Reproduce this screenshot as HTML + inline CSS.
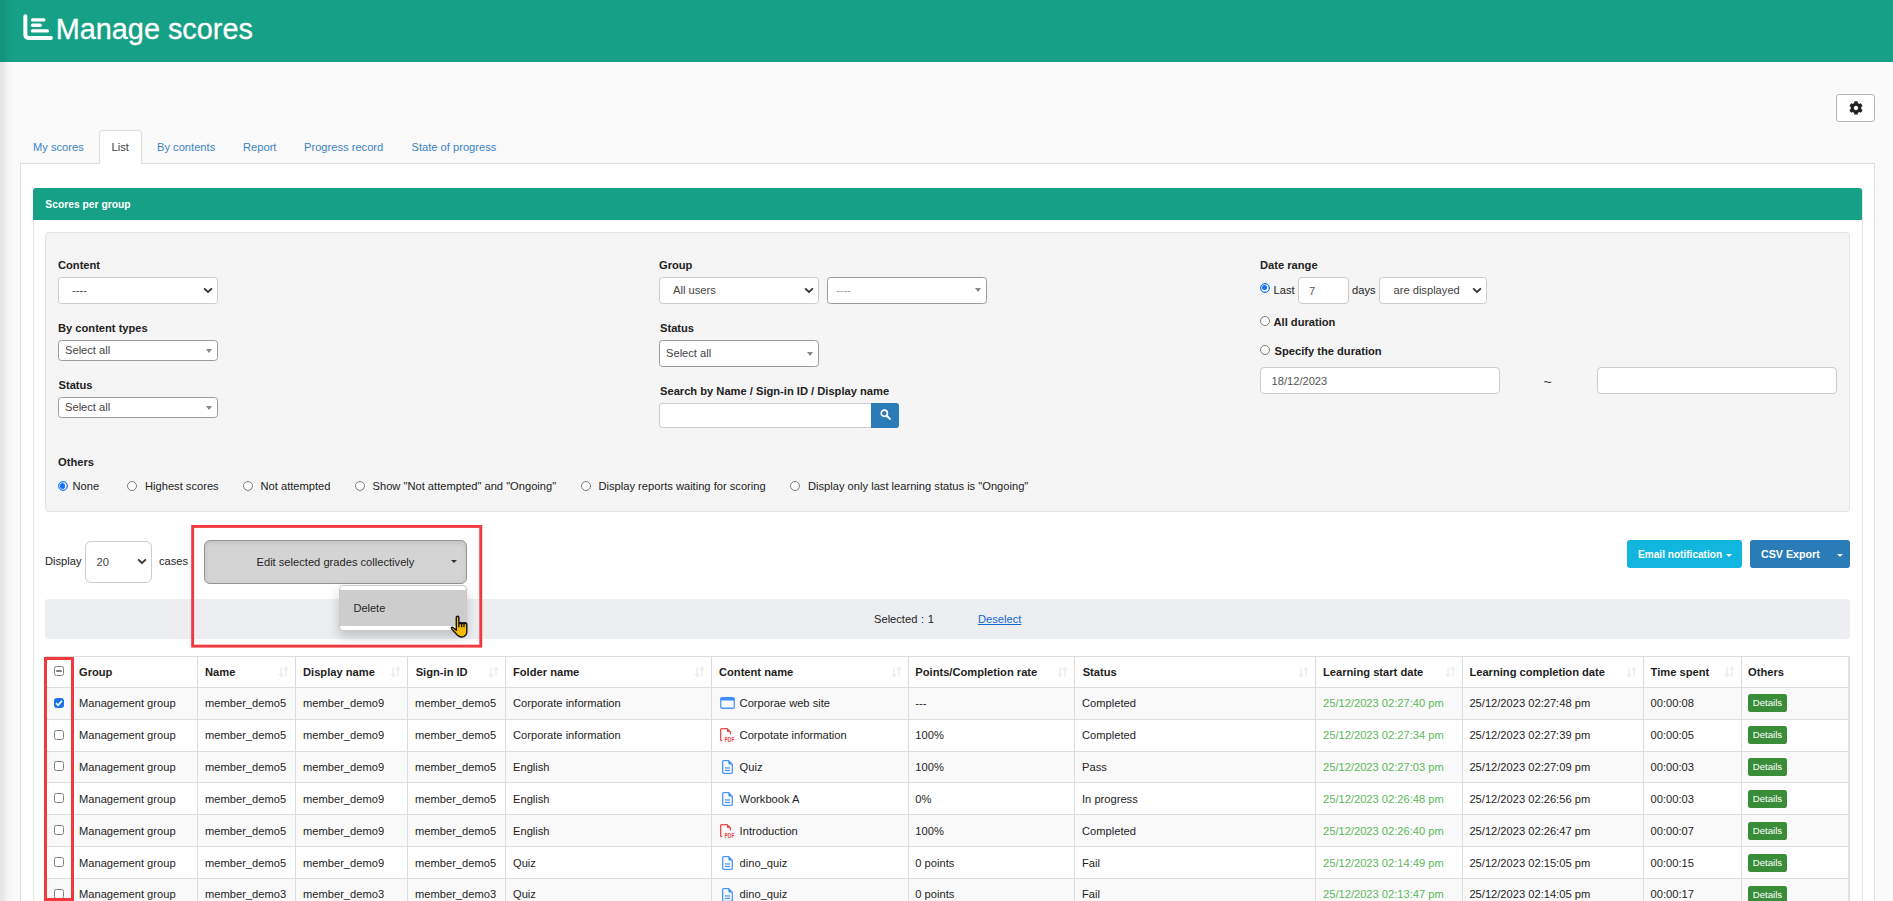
<!DOCTYPE html>
<html lang="en">
<head>
<meta charset="utf-8">
<title>Manage scores</title>
<style>
*{box-sizing:border-box;margin:0;padding:0}
html,body{width:1893px;height:901px;overflow:hidden}
body{position:relative;background:#fafafa;font-family:"Liberation Sans",Arial,sans-serif;font-size:11.15px;color:#222;line-height:1}
.abs,.abs>*{position:absolute}
.abs{left:0;top:0;width:1893px;height:901px;overflow:hidden}
.t{position:absolute;white-space:nowrap;line-height:14px;height:14px;margin-top:-1px}
.b{font-weight:bold}
#edge{left:0;top:0;width:16px;height:901px;background:linear-gradient(to right,rgba(0,0,0,.085) 0,rgba(0,0,0,.08) 3px,rgba(0,0,0,.02) 8px,rgba(0,0,0,0) 15px)}
#hdr{left:0;top:0;width:1893px;height:62px;background:#16a085}
#title{left:55.7px;top:12.1px;font-size:28.85px;line-height:34px;color:#fff;white-space:nowrap;-webkit-text-stroke:.3px #fff;transform:scaleY(1.033);transform-origin:0 26.5px}
#gear{left:1836px;top:94px;width:39px;height:28px;background:#fff;border:1px solid #b5b5b5;border-radius:3px}
#tabline{left:20px;top:163px;width:1855px;height:1px;background:#ddd}
#tabc{left:20px;top:164px;width:1855px;height:760px;background:#fff;border-left:1px solid #ddd;border-right:1px solid #ddd}
#tabact{left:99px;top:130px;width:43px;height:34px;background:#fff;border:1px solid #ddd;border-bottom:0;border-radius:4px 4px 0 0}
.tab{top:140.5px;color:#3b84c4}
#panel{left:33px;top:188px;width:1830px;height:760px;border:1px solid #e5e5e5;border-top:0;border-radius:3px 3px 0 0}
#phead{left:33px;top:188px;width:1829px;height:32px;background:#16a085;border-radius:3px 3px 0 0}
#well{left:45px;top:232px;width:1805px;height:280px;background:#f5f5f5;border:1px solid #e3e3e3;border-radius:4px}
.sel{background:#fff;border:1px solid #ccc;border-radius:3.5px;height:27px}
.sel .t{top:6px;color:#444}
.s2{background:#fff;border:1px solid #9c9c9c;border-radius:3.5px}
.s2 .t{color:#444}
.s2 i{position:absolute;width:0;height:0;border-left:3px solid transparent;border-right:3px solid transparent;border-top:4px solid #888}
.chev{position:absolute}
.radio{width:10px;height:10px;border:1px solid #7c7c7c;border-radius:50%;background:#fff}
.radio.on{border:1px solid #1672f3;box-shadow:inset 0 0 0 .3px #1672f3}
.radio.on:after{content:"";position:absolute;left:1.2px;top:1.2px;width:5.6px;height:5.6px;border-radius:50%;background:#1672f3}
.inp{background:#fff;border:1px solid #ccc;border-radius:4px;height:27px}
.inp .t{top:7px;color:#555}
#sbtn{left:871px;top:403px;width:28px;height:25px;background:#2b7bb9;border-radius:0 3px 3px 0}
#bigbtn{left:204px;top:540px;width:263px;height:44px;background:#d4d4d4;border:1px solid #949494;border-radius:6px;box-shadow:inset 0 2px 4px rgba(0,0,0,.09)}
#dd{left:339px;top:585px;width:128px;height:46px;background:#fff;border:1px solid #c9c9c9;border-radius:4px;box-shadow:0 6px 12px rgba(0,0,0,.19)}
#dd div{position:absolute;left:0;top:4px;width:126px;height:36px;background:#cdcdcd}
.caret{width:0;height:0;border-left:3.5px solid transparent;border-right:3.5px solid transparent;border-top:3.5px solid #333}
#b1{left:1627px;top:540px;width:115px;height:28px;background:#10b6de;border-radius:3px}
#b2{left:1750px;top:540px;width:100px;height:28px;background:#2b7bb9;border-radius:3px}
.bt{color:#fff;font-weight:bold;font-size:10.2px}
#selbar{left:45px;top:599px;width:1805px;height:40px;background:#edeef2;border-radius:4px}
.red{border:3px solid #f23a3e}
#tbl{left:45px;top:0;width:1805px;height:901px}
#tbl>*{position:absolute}
.tr{left:0;width:1805px}
.tr>*{position:absolute;white-space:nowrap}
.td{top:0;color:#1e1e1e}
.td.g{color:#5cb85c}
.th{top:0;font-weight:bold;color:#1e1e1e}
.hl{left:0;width:1805px;height:1px;background:#ddd}
.vl{top:656px;width:1px;height:260px;background:#ddd;margin-left:-45px}
.cb{width:10px;height:10px;border:1px solid #808080;border-radius:2.5px;background:#fff}
.cb.on{background:#1a73e8;border-color:#1a73e8}
.cb.on svg{position:absolute;left:-1px;top:-1px}
.cb.ind i{position:absolute;left:1px;top:3.2px;width:6px;height:1.7px;background:#808080;border-radius:1px}
.det{width:39px;height:18px;background:#398d39;border-radius:2.5px;color:#fff;font-size:9.6px;line-height:18.6px;text-align:center}
.fi,.sort{position:absolute}
</style>
</head>
<body>
<div class="abs">
  <div id="hdr"></div>
  <svg style="left:23px;top:14px" width="31" height="27" viewBox="0 0 31 27"><path d="M2.35 2.3 V20.6 Q2.35 23.9 5.7 23.9 H27.9" fill="none" stroke="#fff" stroke-width="4" stroke-linecap="round"/><path d="M9.45 5.95 H20.85 M9.45 11.25 H17.25 M9.45 16.9 H24.45" fill="none" stroke="#fff" stroke-width="3.3" stroke-linecap="round"/></svg>
  <div id="title">Manage scores</div>

  <div id="gear"></div>
  <svg style="left:1849px;top:101px" width="14" height="14" viewBox="0 0 512 512"><path fill="#222" d="M487.4 315.7l-42.6-24.6c4.3-23.2 4.3-47 0-70.200l42.6-24.600c4.900-2.800 7.100-8.600 5.500-14-11.100-35.600-30-67.800-54.700-94.600-3.800-4.100-10-5.100-14.800-2.300L380.800 110c-17.900-15.400-38.500-27.300-60.800-35.100V25.800c0-5.600-3.900-10.500-9.400-11.700-36.700-8.200-74.300-7.800-109.200 0-5.500 1.200-9.400 6.100-9.400 11.700V75c-22.200 7.900-42.800 19.800-60.800 35.100L88.700 85.500c-4.900-2.800-11-1.900-14.800 2.300-24.700 26.700-43.600 58.900-54.700 94.600-1.700 5.400.6 11.200 5.500 14L67.300 221c-4.300 23.200-4.300 47 0 70.200l-42.600 24.600c-4.900 2.800-7.100 8.600-5.500 14 11.100 35.600 30 67.800 54.700 94.600 3.800 4.100 10 5.100 14.800 2.300l42.600-24.600c17.900 15.400 38.500 27.300 60.800 35.100v49.200c0 5.600 3.900 10.500 9.400 11.700 36.700 8.200 74.300 7.800 109.200 0 5.500-1.200 9.400-6.100 9.400-11.700v-49.200c22.200-7.900 42.800-19.800 60.800-35.100l42.600 24.600c4.900 2.800 11 1.900 14.800-2.300 24.700-26.700 43.600-58.900 54.700-94.600 1.500-5.500-.7-11.300-5.600-14.100zM256 336c-44.100 0-80-35.900-80-80s35.900-80 80-80 80 35.900 80 80-35.900 80-80 80z"/></svg>

  <div id="tabline"></div>
  <div id="tabc"></div>
  <div id="tabact"></div>
  <div class="t tab" style="left:33px">My scores</div>
  <div class="t tab" style="left:111.5px;color:#444">List</div>
  <div class="t tab" style="left:157px">By contents</div>
  <div class="t tab" style="left:243px">Report</div>
  <div class="t tab" style="left:304px">Progress record</div>
  <div class="t tab" style="left:411.5px">State of progress</div>

  <div id="panel"></div>
  <div id="phead"></div>
  <div class="t b" style="left:45.3px;top:199px;color:#fff;font-size:10.3px">Scores per group</div>

  <div id="well"></div>
  <!-- column 1 -->
  <div class="t b" style="left:58px;top:258.5px">Content</div>
  <div class="sel" style="left:58px;top:277px;width:160px"><div class="t" style="left:13px">----</div>
    <svg class="chev" style="left:144.4px;top:8.9px" width="10" height="8" viewBox="0 0 10 8"><path d="M1.1 1.3 L5 5 L8.9 1.3" fill="none" stroke="#333" stroke-width="1.8"/></svg></div>
  <div class="t b" style="left:58px;top:321.5px">By content types</div>
  <div class="s2" style="left:58px;top:340px;width:160px;height:21px"><div class="t" style="left:6px;top:3px">Select all</div><i style="left:147px;top:7.5px"></i></div>
  <div class="t b" style="left:58.5px;top:378.5px">Status</div>
  <div class="s2" style="left:58px;top:397px;width:160px;height:21px"><div class="t" style="left:6px;top:3px">Select all</div><i style="left:147px;top:7.5px"></i></div>
  <div class="t b" style="left:58px;top:455.5px">Others</div>
  <div class="radio on" style="left:57.5px;top:481px"></div><div class="t" style="left:72.5px;top:479.5px">None</div>
  <div class="radio" style="left:127px;top:481px"></div><div class="t" style="left:145px;top:479.5px">Highest scores</div>
  <div class="radio" style="left:243px;top:481px"></div><div class="t" style="left:260.5px;top:479.5px">Not attempted</div>
  <div class="radio" style="left:355px;top:481px"></div><div class="t" style="left:372.5px;top:479.5px">Show "Not attempted" and "Ongoing"</div>
  <div class="radio" style="left:581px;top:481px"></div><div class="t" style="left:598.5px;top:479.5px">Display reports waiting for scoring</div>
  <div class="radio" style="left:790px;top:481px"></div><div class="t" style="left:808px;top:479.5px">Display only last learning status is "Ongoing"</div>

  <!-- column 2 -->
  <div class="t b" style="left:659px;top:258.5px">Group</div>
  <div class="sel" style="left:659px;top:277px;width:160px"><div class="t" style="left:13px">All users</div>
    <svg class="chev" style="left:144.4px;top:8.9px" width="10" height="8" viewBox="0 0 10 8"><path d="M1.1 1.3 L5 5 L8.9 1.3" fill="none" stroke="#333" stroke-width="1.8"/></svg></div>
  <div class="s2" style="left:827px;top:277px;width:160px;height:27px"><div class="t" style="left:8px;top:6px;color:#999">----</div><i style="left:147px;top:10px"></i></div>
  <div class="t b" style="left:660px;top:321.5px">Status</div>
  <div class="s2" style="left:659px;top:340px;width:160px;height:27px"><div class="t" style="left:6px;top:6px">Select all</div><i style="left:147px;top:10.5px"></i></div>
  <div class="t b" style="left:660px;top:384.5px">Search by Name / Sign-in ID / Display name</div>
  <div class="inp" style="left:659px;top:403px;width:213px;height:25px;border-radius:3px 0 0 3px"></div>
  <div id="sbtn"></div>
  <svg style="left:880px;top:408.6px" width="11" height="11" viewBox="0 0 12 12"><circle cx="4.7" cy="4.7" r="3.4" fill="none" stroke="#fff" stroke-width="1.8"/><path d="M7.3 7.3 L10.8 10.8" stroke="#fff" stroke-width="2.2" stroke-linecap="round"/></svg>

  <!-- column 3 -->
  <div class="t b" style="left:1260px;top:258.5px">Date range</div>
  <div class="radio on" style="left:1259.5px;top:282.5px"></div>
  <div class="t" style="left:1273.5px;top:284px">Last</div>
  <div class="inp" style="left:1298px;top:277px;width:51px"><div class="t" style="left:10px">7</div></div>
  <div class="t" style="left:1352px;top:284px">days</div>
  <div class="sel" style="left:1379px;top:277px;width:108px"><div class="t" style="left:13.5px">are displayed</div>
    <svg class="chev" style="left:92.4px;top:8.9px" width="10" height="8" viewBox="0 0 10 8"><path d="M1.1 1.3 L5 5 L8.9 1.3" fill="none" stroke="#333" stroke-width="1.8"/></svg></div>
  <div class="radio" style="left:1259.5px;top:315.5px"></div>
  <div class="t b" style="left:1273.5px;top:315.5px">All duration</div>
  <div class="radio" style="left:1259.5px;top:345px"></div>
  <div class="t b" style="left:1274.5px;top:344.5px">Specify the duration</div>
  <div class="inp" style="left:1260px;top:367px;width:240px"><div class="t" style="left:10.5px">18/12/2023</div></div>
  <div class="t" style="left:1543.5px;top:375.5px;font-size:14px;color:#333">~</div>
  <div class="inp" style="left:1597px;top:367px;width:240px"></div>

  <!-- toolbar -->
  <div id="selbar"></div>
  <div class="t" style="left:45px;top:554.5px">Display</div>
  <div class="sel" style="left:85px;top:541px;width:67px;height:42px;border-radius:6px"><div class="t" style="left:10.5px;top:14px">20</div>
    <svg class="chev" style="left:50.6px;top:16.2px" width="10" height="8" viewBox="0 0 10 8"><path d="M1.1 1.3 L5 5 L8.9 1.3" fill="none" stroke="#333" stroke-width="1.8"/></svg></div>
  <div class="t" style="left:159px;top:554.5px">cases</div>
  <div id="bigbtn"></div>
  <div class="t" style="left:256.5px;top:556px;color:#262626">Edit selected grades collectively</div>
  <div class="caret" style="left:450.5px;top:560px"></div>
  <div class="t" style="left:874px;top:613px;word-spacing:.6px">Selected : 1</div>
  <div class="t" style="left:978px;top:613px;color:#1166d8;text-decoration:underline">Deselect</div>
  <div id="dd"><div></div></div>
  <div class="t" style="left:353.5px;top:602px;color:#262626;font-size:11px">Delete</div>

  <div id="b1"></div>
  <div class="t bt" style="left:1638px;top:548.7px;font-size:10.1px">Email notification</div>
  <div class="caret" style="left:1725.5px;top:553.5px;border-top-color:#fff"></div>
  <div id="b2"></div>
  <div class="t bt" style="left:1761px;top:548px;font-size:10.7px">CSV Export</div>
  <div class="caret" style="left:1837px;top:553.5px;border-top-color:#fff"></div>

  <!-- table -->
  <div id="tbl">
<div class="tr" style="top:657px;height:30px;background:#fff">
<span class="cb ind" style="left:9px;top:9px"><i></i></span>
<span class="th" style="left:34px;line-height:30px">Group</span>
<span class="th" style="left:160px;line-height:30px">Name</span>
<svg class="sort" style="left:233px;top:9px" width="11" height="12" viewBox="0 0 11 12"><path d="M3 1 V10.2 M1 8.3 L3 10.6 L5 8.3" fill="none" stroke="#eeeeee" stroke-width="1.5"/><path d="M8 11 V1.8 M6 3.7 L8 1.4 L10 3.7" fill="none" stroke="#efefef" stroke-width="1.5"/></svg>
<span class="th" style="left:258px;line-height:30px">Display name</span>
<svg class="sort" style="left:345px;top:9px" width="11" height="12" viewBox="0 0 11 12"><path d="M3 1 V10.2 M1 8.3 L3 10.6 L5 8.3" fill="none" stroke="#eeeeee" stroke-width="1.5"/><path d="M8 11 V1.8 M6 3.7 L8 1.4 L10 3.7" fill="none" stroke="#efefef" stroke-width="1.5"/></svg>
<span class="th" style="left:370.7px;line-height:30px">Sign-in ID</span>
<svg class="sort" style="left:443px;top:9px" width="11" height="12" viewBox="0 0 11 12"><path d="M3 1 V10.2 M1 8.3 L3 10.6 L5 8.3" fill="none" stroke="#eeeeee" stroke-width="1.5"/><path d="M8 11 V1.8 M6 3.7 L8 1.4 L10 3.7" fill="none" stroke="#efefef" stroke-width="1.5"/></svg>
<span class="th" style="left:468px;line-height:30px">Folder name</span>
<svg class="sort" style="left:649px;top:9px" width="11" height="12" viewBox="0 0 11 12"><path d="M3 1 V10.2 M1 8.3 L3 10.6 L5 8.3" fill="none" stroke="#eeeeee" stroke-width="1.5"/><path d="M8 11 V1.8 M6 3.7 L8 1.4 L10 3.7" fill="none" stroke="#efefef" stroke-width="1.5"/></svg>
<span class="th" style="left:674px;line-height:30px">Content name</span>
<svg class="sort" style="left:846px;top:9px" width="11" height="12" viewBox="0 0 11 12"><path d="M3 1 V10.2 M1 8.3 L3 10.6 L5 8.3" fill="none" stroke="#eeeeee" stroke-width="1.5"/><path d="M8 11 V1.8 M6 3.7 L8 1.4 L10 3.7" fill="none" stroke="#efefef" stroke-width="1.5"/></svg>
<span class="th" style="left:870.3px;line-height:30px">Points/Completion rate</span>
<svg class="sort" style="left:1012px;top:9px" width="11" height="12" viewBox="0 0 11 12"><path d="M3 1 V10.2 M1 8.3 L3 10.6 L5 8.3" fill="none" stroke="#eeeeee" stroke-width="1.5"/><path d="M8 11 V1.8 M6 3.7 L8 1.4 L10 3.7" fill="none" stroke="#efefef" stroke-width="1.5"/></svg>
<span class="th" style="left:1037.7px;line-height:30px">Status</span>
<svg class="sort" style="left:1253px;top:9px" width="11" height="12" viewBox="0 0 11 12"><path d="M3 1 V10.2 M1 8.3 L3 10.6 L5 8.3" fill="none" stroke="#eeeeee" stroke-width="1.5"/><path d="M8 11 V1.8 M6 3.7 L8 1.4 L10 3.7" fill="none" stroke="#efefef" stroke-width="1.5"/></svg>
<span class="th" style="left:1278px;line-height:30px">Learning start date</span>
<svg class="sort" style="left:1400px;top:9px" width="11" height="12" viewBox="0 0 11 12"><path d="M3 1 V10.2 M1 8.3 L3 10.6 L5 8.3" fill="none" stroke="#eeeeee" stroke-width="1.5"/><path d="M8 11 V1.8 M6 3.7 L8 1.4 L10 3.7" fill="none" stroke="#efefef" stroke-width="1.5"/></svg>
<span class="th" style="left:1424.4px;line-height:30px">Learning completion date</span>
<svg class="sort" style="left:1581px;top:9px" width="11" height="12" viewBox="0 0 11 12"><path d="M3 1 V10.2 M1 8.3 L3 10.6 L5 8.3" fill="none" stroke="#eeeeee" stroke-width="1.5"/><path d="M8 11 V1.8 M6 3.7 L8 1.4 L10 3.7" fill="none" stroke="#efefef" stroke-width="1.5"/></svg>
<span class="th" style="left:1605.6px;line-height:30px">Time spent</span>
<svg class="sort" style="left:1679px;top:9px" width="11" height="12" viewBox="0 0 11 12"><path d="M3 1 V10.2 M1 8.3 L3 10.6 L5 8.3" fill="none" stroke="#eeeeee" stroke-width="1.5"/><path d="M8 11 V1.8 M6 3.7 L8 1.4 L10 3.7" fill="none" stroke="#efefef" stroke-width="1.5"/></svg>
<span class="th" style="left:1703px;line-height:30px">Others</span>
</div>
<div class="tr" style="top:688px;height:31px;background:#f9f9f9">
<span class="cb on" style="left:9px;top:10px"><svg width="10" height="10" viewBox="0 0 10 10"><path d="M2 5.2 L4.1 7.3 L8 2.8" fill="none" stroke="#fff" stroke-width="1.7"/></svg></span>
<span class="td" style="left:34px;top:0px;line-height:31px">Management group</span>
<span class="td" style="left:160px;top:0px;line-height:31px">member_demo5</span>
<span class="td" style="left:258px;top:0px;line-height:31px">member_demo9</span>
<span class="td" style="left:370px;top:0px;line-height:31px">member_demo5</span>
<span class="td" style="left:468px;top:0px;line-height:31px">Corporate information</span>
<svg class="fi" style="left:675px;top:9px" width="15" height="12" viewBox="0 0 15 12"><rect x="0.75" y="0.75" width="13.5" height="10.5" rx="1.3" fill="#fff" stroke="#4a93ff" stroke-width="1.3"/><rect x="0.6" y="0.4" width="13.8" height="3" rx="1" fill="#3d8bfd"/></svg><span class="td" style="left:694.6px;top:0px;line-height:31px">Corporae web site</span>
<span class="td" style="left:870.3px;top:0px;line-height:31px">---</span>
<span class="td" style="left:1037px;top:0px;line-height:31px">Completed</span>
<span class="td g" style="left:1278px;top:0px;line-height:31px">25/12/2023 02:27:40 pm</span>
<span class="td" style="left:1424.4px;top:0px;line-height:31px">25/12/2023 02:27:48 pm</span>
<span class="td" style="left:1605.6px;top:0px;line-height:31px">00:00:08</span>
<span class="det" style="left:1703px;top:6px">Details</span>
</div>
<div class="tr" style="top:720px;height:31px;background:#fff">
<span class="cb" style="left:9px;top:10px"></span>
<span class="td" style="left:34px;top:0px;line-height:31px">Management group</span>
<span class="td" style="left:160px;top:0px;line-height:31px">member_demo5</span>
<span class="td" style="left:258px;top:0px;line-height:31px">member_demo9</span>
<span class="td" style="left:370px;top:0px;line-height:31px">member_demo5</span>
<span class="td" style="left:468px;top:0px;line-height:31px">Corporate information</span>
<svg class="fi" style="left:675px;top:8px" width="15" height="14" viewBox="0 0 15 14"><path d="M2.2 12.7 H1.6 Q0.7 12.7 0.7 11.8 V1.6 Q0.7 0.7 1.6 0.7 H7 L10.4 4.1 V6.6" fill="none" stroke="#e5484d" stroke-width="1.3"/><path d="M7 0.4 L10.7 4.1 H7.9 Q7 4.1 7 3.2 Z" fill="#e5484d"/><text x="4.6" y="14" font-family="Liberation Sans, sans-serif" font-weight="bold" font-size="6.8" fill="#e5484d" textLength="9.8" lengthAdjust="spacingAndGlyphs">PDF</text></svg><span class="td" style="left:694.6px;top:0px;line-height:31px">Corpotate information</span>
<span class="td" style="left:870.3px;top:0px;line-height:31px">100%</span>
<span class="td" style="left:1037px;top:0px;line-height:31px">Completed</span>
<span class="td g" style="left:1278px;top:0px;line-height:31px">25/12/2023 02:27:34 pm</span>
<span class="td" style="left:1424.4px;top:0px;line-height:31px">25/12/2023 02:27:39 pm</span>
<span class="td" style="left:1605.6px;top:0px;line-height:31px">00:00:05</span>
<span class="det" style="left:1703px;top:6px">Details</span>
</div>
<div class="tr" style="top:752px;height:30px;background:#f9f9f9">
<span class="cb" style="left:9px;top:9px"></span>
<span class="td" style="left:34px;top:0px;line-height:30px">Management group</span>
<span class="td" style="left:160px;top:0px;line-height:30px">member_demo5</span>
<span class="td" style="left:258px;top:0px;line-height:30px">member_demo9</span>
<span class="td" style="left:370px;top:0px;line-height:30px">member_demo5</span>
<span class="td" style="left:468px;top:0px;line-height:30px">English</span>
<svg class="fi" style="left:677px;top:8px" width="11" height="14" viewBox="0 0 11 14"><path d="M1.7 0.7 H6.6 L10.3 4.4 V12.3 Q10.3 13.3 9.3 13.3 H1.7 Q0.7 13.3 0.7 12.3 V1.7 Q0.7 0.7 1.7 0.7 Z" fill="#fff" stroke="#4a93ff" stroke-width="1.3"/><path d="M6.4 0.4 L10.6 4.6 H7.4 Q6.4 4.6 6.4 3.6 Z" fill="#3d8bfd"/><rect x="3" y="7.3" width="5" height="1.3" fill="#4a93ff"/><rect x="3" y="9.8" width="5" height="1.3" fill="#4a93ff"/></svg><span class="td" style="left:694.6px;top:0px;line-height:30px">Quiz</span>
<span class="td" style="left:870.3px;top:0px;line-height:30px">100%</span>
<span class="td" style="left:1037px;top:0px;line-height:30px">Pass</span>
<span class="td g" style="left:1278px;top:0px;line-height:30px">25/12/2023 02:27:03 pm</span>
<span class="td" style="left:1424.4px;top:0px;line-height:30px">25/12/2023 02:27:09 pm</span>
<span class="td" style="left:1605.6px;top:0px;line-height:30px">00:00:03</span>
<span class="det" style="left:1703px;top:6px">Details</span>
</div>
<div class="tr" style="top:783px;height:31px;background:#fff">
<span class="cb" style="left:9px;top:10px"></span>
<span class="td" style="left:34px;top:1px;line-height:31px">Management group</span>
<span class="td" style="left:160px;top:1px;line-height:31px">member_demo5</span>
<span class="td" style="left:258px;top:1px;line-height:31px">member_demo9</span>
<span class="td" style="left:370px;top:1px;line-height:31px">member_demo5</span>
<span class="td" style="left:468px;top:1px;line-height:31px">English</span>
<svg class="fi" style="left:677px;top:9px" width="11" height="14" viewBox="0 0 11 14"><path d="M1.7 0.7 H6.6 L10.3 4.4 V12.3 Q10.3 13.3 9.3 13.3 H1.7 Q0.7 13.3 0.7 12.3 V1.7 Q0.7 0.7 1.7 0.7 Z" fill="#fff" stroke="#4a93ff" stroke-width="1.3"/><path d="M6.4 0.4 L10.6 4.6 H7.4 Q6.4 4.6 6.4 3.6 Z" fill="#3d8bfd"/><rect x="3" y="7.3" width="5" height="1.3" fill="#4a93ff"/><rect x="3" y="9.8" width="5" height="1.3" fill="#4a93ff"/></svg><span class="td" style="left:694.6px;top:1px;line-height:31px">Workbook A</span>
<span class="td" style="left:870.3px;top:1px;line-height:31px">0%</span>
<span class="td" style="left:1037px;top:1px;line-height:31px">In progress</span>
<span class="td g" style="left:1278px;top:1px;line-height:31px">25/12/2023 02:26:48 pm</span>
<span class="td" style="left:1424.4px;top:1px;line-height:31px">25/12/2023 02:26:56 pm</span>
<span class="td" style="left:1605.6px;top:1px;line-height:31px">00:00:03</span>
<span class="det" style="left:1703px;top:7px">Details</span>
</div>
<div class="tr" style="top:815px;height:31px;background:#f9f9f9">
<span class="cb" style="left:9px;top:10px"></span>
<span class="td" style="left:34px;top:1px;line-height:31px">Management group</span>
<span class="td" style="left:160px;top:1px;line-height:31px">member_demo5</span>
<span class="td" style="left:258px;top:1px;line-height:31px">member_demo9</span>
<span class="td" style="left:370px;top:1px;line-height:31px">member_demo5</span>
<span class="td" style="left:468px;top:1px;line-height:31px">English</span>
<svg class="fi" style="left:675px;top:9px" width="15" height="14" viewBox="0 0 15 14"><path d="M2.2 12.7 H1.6 Q0.7 12.7 0.7 11.8 V1.6 Q0.7 0.7 1.6 0.7 H7 L10.4 4.1 V6.6" fill="none" stroke="#e5484d" stroke-width="1.3"/><path d="M7 0.4 L10.7 4.1 H7.9 Q7 4.1 7 3.2 Z" fill="#e5484d"/><text x="4.6" y="14" font-family="Liberation Sans, sans-serif" font-weight="bold" font-size="6.8" fill="#e5484d" textLength="9.8" lengthAdjust="spacingAndGlyphs">PDF</text></svg><span class="td" style="left:694.6px;top:1px;line-height:31px">Introduction</span>
<span class="td" style="left:870.3px;top:1px;line-height:31px">100%</span>
<span class="td" style="left:1037px;top:1px;line-height:31px">Completed</span>
<span class="td g" style="left:1278px;top:1px;line-height:31px">25/12/2023 02:26:40 pm</span>
<span class="td" style="left:1424.4px;top:1px;line-height:31px">25/12/2023 02:26:47 pm</span>
<span class="td" style="left:1605.6px;top:1px;line-height:31px">00:00:07</span>
<span class="det" style="left:1703px;top:7px">Details</span>
</div>
<div class="tr" style="top:847px;height:31px;background:#fff">
<span class="cb" style="left:9px;top:10px"></span>
<span class="td" style="left:34px;top:1px;line-height:31px">Management group</span>
<span class="td" style="left:160px;top:1px;line-height:31px">member_demo5</span>
<span class="td" style="left:258px;top:1px;line-height:31px">member_demo9</span>
<span class="td" style="left:370px;top:1px;line-height:31px">member_demo5</span>
<span class="td" style="left:468px;top:1px;line-height:31px">Quiz</span>
<svg class="fi" style="left:677px;top:9px" width="11" height="14" viewBox="0 0 11 14"><path d="M1.7 0.7 H6.6 L10.3 4.4 V12.3 Q10.3 13.3 9.3 13.3 H1.7 Q0.7 13.3 0.7 12.3 V1.7 Q0.7 0.7 1.7 0.7 Z" fill="#fff" stroke="#4a93ff" stroke-width="1.3"/><path d="M6.4 0.4 L10.6 4.6 H7.4 Q6.4 4.6 6.4 3.6 Z" fill="#3d8bfd"/><rect x="3" y="7.3" width="5" height="1.3" fill="#4a93ff"/><rect x="3" y="9.8" width="5" height="1.3" fill="#4a93ff"/></svg><span class="td" style="left:694.6px;top:1px;line-height:31px">dino_quiz</span>
<span class="td" style="left:870.3px;top:1px;line-height:31px">0 points</span>
<span class="td" style="left:1037px;top:1px;line-height:31px">Fail</span>
<span class="td g" style="left:1278px;top:1px;line-height:31px">25/12/2023 02:14:49 pm</span>
<span class="td" style="left:1424.4px;top:1px;line-height:31px">25/12/2023 02:15:05 pm</span>
<span class="td" style="left:1605.6px;top:1px;line-height:31px">00:00:15</span>
<span class="det" style="left:1703px;top:7px">Details</span>
</div>
<div class="tr" style="top:879px;height:31px;background:#f9f9f9">
<span class="cb" style="left:9px;top:10px"></span>
<span class="td" style="left:34px;top:0px;line-height:31px">Management group</span>
<span class="td" style="left:160px;top:0px;line-height:31px">member_demo3</span>
<span class="td" style="left:258px;top:0px;line-height:31px">member_demo3</span>
<span class="td" style="left:370px;top:0px;line-height:31px">member_demo3</span>
<span class="td" style="left:468px;top:0px;line-height:31px">Quiz</span>
<svg class="fi" style="left:677px;top:9px" width="11" height="14" viewBox="0 0 11 14"><path d="M1.7 0.7 H6.6 L10.3 4.4 V12.3 Q10.3 13.3 9.3 13.3 H1.7 Q0.7 13.3 0.7 12.3 V1.7 Q0.7 0.7 1.7 0.7 Z" fill="#fff" stroke="#4a93ff" stroke-width="1.3"/><path d="M6.4 0.4 L10.6 4.6 H7.4 Q6.4 4.6 6.4 3.6 Z" fill="#3d8bfd"/><rect x="3" y="7.3" width="5" height="1.3" fill="#4a93ff"/><rect x="3" y="9.8" width="5" height="1.3" fill="#4a93ff"/></svg><span class="td" style="left:694.6px;top:0px;line-height:31px">dino_quiz</span>
<span class="td" style="left:870.3px;top:0px;line-height:31px">0 points</span>
<span class="td" style="left:1037px;top:0px;line-height:31px">Fail</span>
<span class="td g" style="left:1278px;top:0px;line-height:31px">25/12/2023 02:13:47 pm</span>
<span class="td" style="left:1424.4px;top:0px;line-height:31px">25/12/2023 02:14:05 pm</span>
<span class="td" style="left:1605.6px;top:0px;line-height:31px">00:00:17</span>
<span class="det" style="left:1703px;top:7px">Details</span>
</div>
<div class="hl" style="top:656px"></div>
<div class="hl" style="top:687px"></div>
<div class="hl" style="top:719px"></div>
<div class="hl" style="top:751px"></div>
<div class="hl" style="top:782px"></div>
<div class="hl" style="top:814px"></div>
<div class="hl" style="top:846px"></div>
<div class="hl" style="top:878px"></div>
<div class="vl" style="left:45px"></div>
<div class="vl" style="left:71px"></div>
<div class="vl" style="left:197px"></div>
<div class="vl" style="left:295px"></div>
<div class="vl" style="left:407px"></div>
<div class="vl" style="left:505px"></div>
<div class="vl" style="left:711px"></div>
<div class="vl" style="left:908px"></div>
<div class="vl" style="left:1074px"></div>
<div class="vl" style="left:1315px"></div>
<div class="vl" style="left:1462px"></div>
<div class="vl" style="left:1643px"></div>
<div class="vl" style="left:1741px"></div>
<div class="vl" style="left:1849px"></div>
<div class="vl" style="left:1848px;background:#e4e4e4"></div>
  </div>

  <!-- annotations -->
  <svg style="left:190px;top:524px" width="293" height="125" viewBox="0 0 293 125"><rect x="2.65" y="2.45" width="288.1" height="119.7" fill="none" stroke="#f23a3e" stroke-width="2.9"/></svg>
  <div class="red" style="left:44px;top:657px;width:30px;height:244px"></div>
  <!-- hand cursor -->
  <svg style="left:450px;top:615px" width="19" height="24" viewBox="0 0 19 24"><path d="M6.3 2.2 Q6.3 1.2 7.6 1.2 Q8.9 1.2 8.9 2.2 V7.9 H15.6 Q16.8 7.9 16.8 9.2 V17.8 Q16.6 20.2 14.2 21.4 Q12 22.4 10.4 21.8 Q8.6 21.4 7.2 20 L1.6 13.9 Q1 13 1.8 12.4 Q2.6 12 3.4 12.8 L6.3 15.2 Z" fill="#f6b900" stroke="#111" stroke-width="1.4" stroke-linejoin="round"/><path d="M8.9 7.9 V12.3 M11.6 8.4 V12.3 M14 8.4 V12.3" stroke="#111" stroke-width="1.3" fill="none"/><path d="M9 8.3 H16" stroke="#111" stroke-width="1.8" fill="none"/></svg>

  <div id="edge"></div>
</div>
</body>
</html>
